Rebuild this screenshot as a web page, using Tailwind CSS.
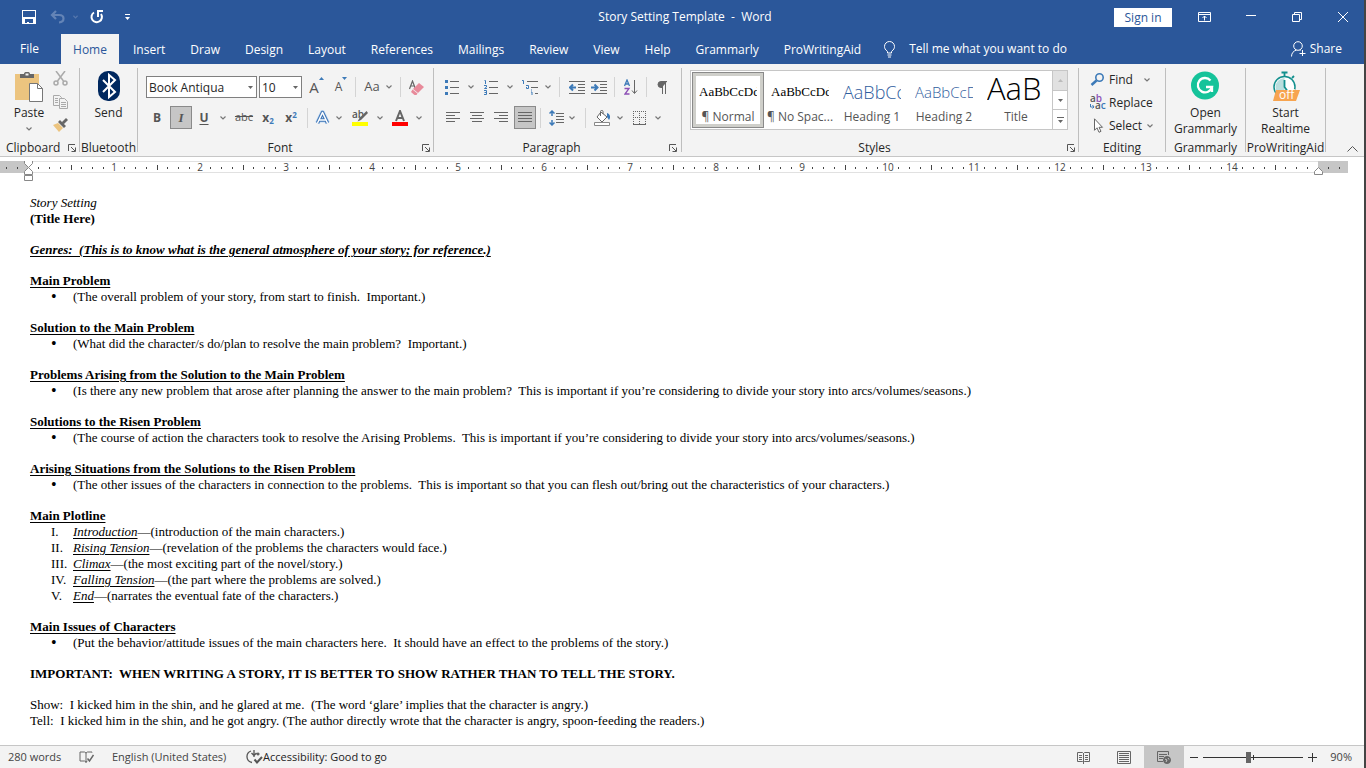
<!DOCTYPE html>
<html lang="en">
  <head>
    <meta charset="UTF-8" />
    <meta name="viewport" content="width=device-width, initial-scale=1.0" />
    <title>Story Setting Template - Word</title>
    <script src="https://cdn.jsdelivr.net/npm/@tailwindcss/browser@4"></script>
  </head>

  <body
    class="flex min-h-screen flex-col border-r-2 border-[#444] bg-white font-['Open_Sans','Noto_Sans',sans-serif] text-xs text-[#262626]"
  >
    <!-- shared icons -->
    <svg class="hidden">
      <symbol id="chev" viewBox="0 0 6 4">
        <path d="M.5.5 3 3 5.500.5" fill="none" stroke="#777" stroke-width="1.200" />
      </symbol>
      <symbol id="launch" viewBox="0 0 8 8">
        <path d="M.5 7V.5H7M3 3l4 4M7.500 3.500v4h-4" fill="none" stroke="#555" />
      </symbol>
    </svg>

    <header class="bg-[#2b579a] text-white">
      <div class="flex h-[34px] items-center">
        <div class="flex flex-1 items-center pl-[22px]">
          <button aria-label="Save">
            <svg width="14" height="14" viewBox="0 0 14 14">
              <path d="M0 0h14v14H0z" fill="#fff" />
              <path d="M1 1h12v6H1zM3 9h8v4H7v-1H5v1H3z" fill="#2b579a" />
            </svg>
          </button>
          <button class="ml-[14px] flex items-center gap-2" aria-label="Undo">
            <svg width="15" height="14" viewBox="0 0 15 14" fill="none" stroke="#6484b6" stroke-width="2.200">
              <path d="M6 1 2 5l4 4M2 5h7c6 0 6 7 0 7.500" />
            </svg>
            <svg width="5" height="4" viewBox="0 0 6 4">
              <path d="M.5.5 3 3 5.500.5" fill="none" stroke="#5577ad" stroke-width="1.500" />
            </svg>
          </button>
          <button class="ml-3" aria-label="Repeat">
            <svg width="14" height="14" viewBox="0 0 14 14" fill="none" stroke="#fff" stroke-width="2">
              <path d="M4 2.500A5.200 5.200 0 1 0 11 4" />
              <path d="M8 7V1H13" />
            </svg>
          </button>
          <button class="ml-5" aria-label="Customize Quick Access Toolbar">
            <svg width="7" height="7" viewBox="0 0 7 7" fill="#fff">
              <path d="M1 0h5v1H1zM1 3h5L3.500 6z" />
            </svg>
          </button>
        </div>
        <h1 class="whitespace-nowrap">Story Setting Template&nbsp; -&nbsp; Word</h1>
        <div class="flex flex-1 items-center justify-end pr-4">
          <button class="h-[19px] w-[58px] bg-white leading-[19px] text-[#2b579a]">Sign in</button>
          <button class="ml-[26px]" aria-label="Ribbon Display Options">
            <svg width="13" height="10" viewBox="0 0 13 10" fill="none" stroke="#fff">
              <path d="M.5.5h12v9H.5zM.5 2.500h12M6.500 8.500V4M4.500 6l2-2 2 2" />
            </svg>
          </button>
          <button class="ml-[35px]" aria-label="Minimize">
            <svg width="10" height="10" viewBox="0 0 10 10"><path d="M0 3.500h10" stroke="#fff" /></svg>
          </button>
          <button class="ml-9" aria-label="Restore">
            <svg width="10" height="10" viewBox="0 0 10 10" fill="none" stroke="#fff">
              <path d="M.5 2.500h7v7h-7zM2.500 2V.5h7v7H8" />
            </svg>
          </button>
          <button class="ml-9" aria-label="Close">
            <svg width="10" height="10" viewBox="0 0 10 10"><path d="m0 0 10 10M10 0 0 10" stroke="#fff" /></svg>
          </button>
        </div>
      </div>

      <nav class="flex h-[30px] items-stretch">
        <a href="#" class="flex w-[61px] items-center pl-5">File</a>
        <a href="#" class="flex w-[58px] items-center justify-center bg-[#f3f3f3] pt-0.5 text-[#2b579a]">Home</a>
        <div class="flex items-center gap-[25px] pt-0.5 pl-[14px]">
          <a href="#">Insert</a>
          <a href="#">Draw</a>
          <a href="#">Design</a>
          <a href="#">Layout</a>
          <a href="#">References</a>
          <a href="#">Mailings</a>
          <a href="#">Review</a>
          <a href="#">View</a>
          <a href="#">Help</a>
          <a href="#">Grammarly</a>
          <a href="#">ProWritingAid</a>
        </div>
        <button class="ml-[23px] flex items-center gap-[14px]">
          <svg width="11" height="17" viewBox="0 0 11 17" fill="none" stroke="#fff">
            <path d="M3.500 12V10.500C1 8.500.5 7 .5 5.500a5 5 0 0 1 10 0c0 1.500-.5 3-3 5V12zM3.500 14h4M4 16h3" />
          </svg>
          Tell me what you want to do
        </button>
        <button class="mr-[22px] ml-auto flex items-center gap-1">
          <svg width="15" height="16" viewBox="0 0 15 16" fill="none" stroke="#fff">
            <circle cx="7" cy="5" r="4.300" />
            <path d="M.5 15.500c0-3.500 2-5.500 5-6.500M8.500 9l1 .5M11.500 9v6M8.500 12.500h6" />
          </svg>
          Share
        </button>
      </nav>
    </header>

    <!-- ribbon -->
    <section class="flex h-[93px] border-b border-[#c6c6c6] bg-[#f3f3f3]">
      <div class="my-1 flex w-20 flex-col border-r border-[#bebebe]">
        <div class="flex flex-1 pl-[11px]">
          <button class="flex w-9 flex-col items-center">
            <svg class="mt-1" width="28" height="30" viewBox="0 0 28 30">
              <path d="M0 2h24v26H0z" fill="#ecc47f" />
              <path d="M5 6V2h4c0-3 6-3 6 0h4v4z" fill="#666" />
              <path d="M10.500 1.500h3v2h-3z" fill="#f3f3f3" />
              <path d="M14.500 11.500h8l5 5v13h-13z" fill="#fff" stroke="#777" />
              <path d="M22.500 11.500v5h5" fill="none" stroke="#777" />
            </svg>
            <span class="mt-[3px] leading-4">Paste</span>
            <svg class="mt-1.5" width="6" height="4"><use href="#chev" /></svg>
          </button>
          <div class="flex flex-col items-center gap-[9px] pt-[3px] pl-[5px]">
            <button aria-label="Cut">
              <svg width="15" height="15" viewBox="0 0 15 15" fill="none" stroke="#aaa" stroke-width="1.500">
                <path d="m3 0 7.500 10M12 0 4.500 10" />
                <circle cx="3" cy="12" r="2" /><circle cx="12" cy="12" r="2" />
              </svg>
            </button>
            <button aria-label="Copy">
              <svg width="15" height="14" viewBox="0 0 15 14" fill="#f3f3f3" stroke="#aaa">
                <path d="M.5.5h6l2 2v8h-8z" /><path d="M6.500 3.500h5l3 3v7h-8zM2 3.500h3M2 5.500h3M2 7.500h3M8 7.500h5M8 9.500h5M8 11.500h5" />
              </svg>
            </button>
            <button aria-label="Format Painter">
              <svg width="16" height="14" viewBox="0 0 16 14">
                <path d="m1 7 5-2 5 5-4 4z" fill="#ecc47f" />
                <path d="m6 4 2-2 6 6-2 2zM10 4l4-4 2 2-4 4z" fill="#666" />
              </svg>
            </button>
          </div>
        </div>
        <div class="flex h-2 items-center justify-between pr-[3px] pl-1.5">
          Clipboard
          <button aria-label="Clipboard options"><svg width="8" height="8"><use href="#launch" /></svg></button>
        </div>
      </div>

      <div class="my-1 flex w-[58px] flex-col items-center border-r border-[#bebebe]">
        <button class="flex flex-1 flex-col items-center">
          <svg class="mt-[3px]" width="22" height="30" viewBox="0 0 22 30">
            <rect width="22" height="30" rx="10" fill="#00285f" />
            <path d="m5 9 12 12-6 5V4l6 5L5 21" fill="none" stroke="#fff" stroke-width="2" />
          </svg>
          <span class="mt-1 leading-4">Send</span>
        </button>
        <div class="flex h-2 items-center">Bluetooth</div>
      </div>

      <div class="my-1 flex w-[296px] flex-col border-r border-[#bebebe]">
        <div class="flex flex-1 flex-col gap-2 pt-2">
          <div class="flex h-[22px] items-center pl-2">
            <div class="relative h-full w-[111px]">
              <input class="h-full w-full border border-[#7f7f7f] bg-white pl-0.5" value="Book Antiqua" aria-label="Font" />
              <svg class="absolute top-[10px] right-1" width="5" height="3"><path d="M0 0h5L2.500 3z" fill="#666" /></svg>
            </div>
            <div class="relative ml-0.5 h-full w-[43px]">
              <input class="h-full w-full border border-[#7f7f7f] bg-white pl-0.5" value="10" aria-label="Font size" />
              <svg class="absolute top-[10px] right-1" width="5" height="3"><path d="M0 0h5L2.500 3z" fill="#666" /></svg>
            </div>
            <button class="ml-0.5 flex w-[25px] justify-center" aria-label="Grow font">
              <span class="text-[15px] leading-5 text-[#555]">A</span>
              <svg width="5" height="3"><path d="M0 3h5L2.500 0z" fill="#3d7ab8" /></svg>
            </button>
            <button class="flex w-6 justify-center" aria-label="Shrink font">
              <span class="text-xs leading-5 text-[#555]">A</span>
              <svg width="5" height="3"><path d="M0 0h5L2.500 3z" fill="#3d7ab8" /></svg>
            </button>
            <i class="mx-0.5 h-5 w-px bg-[#d4d4d4]"></i>
            <button class="flex w-10 items-center justify-center gap-1.5 text-[13px] text-[#555]">
              Aa <svg width="6" height="4"><use href="#chev" /></svg>
            </button>
            <i class="mx-0.5 h-5 w-px bg-[#d4d4d4]"></i>
            <button class="ml-1.5" aria-label="Clear formatting">
              <svg width="15" height="15" viewBox="0 0 15 15">
                <path d="m.5 9 3-8 3 8M1.500 6h4" fill="none" stroke="#666" stroke-width="1.200" />
                <path d="m10 3 5 4-6 6-5-4z" fill="#e88a9a" />
                <path d="m3.500 9.500 5 4-1 1.500h-2L2 12z" fill="#e88a9a" />
              </svg>
            </button>
          </div>
          <div class="flex h-[23px] items-center pl-1.5 text-[#555]">
            <button class="w-[26px] font-bold">B</button>
            <button class="h-full w-[22px] border border-[#8a8a8a] bg-[#c6c6c6] font-['Liberation_Serif',serif] text-[13px] font-bold italic">I</button>
            <button class="w-6 font-bold underline underline-offset-2">U</button>
            <button class="flex w-[14px] justify-center" aria-label="Underline style"><svg width="6" height="4"><use href="#chev" /></svg></button>
            <button class="w-7 text-[11px] line-through">abc</button>
            <button class="w-5 font-bold">x<sub class="text-[8px] text-[#3d7ab8]">2</sub></button>
            <button class="w-[26px] font-bold">x<sup class="text-[8px] text-[#3d7ab8]">2</sup></button>
            <i class="mx-[3px] h-5 w-px bg-[#d4d4d4]"></i>
            <button class="flex w-[22px] justify-center" aria-label="Text effects">
              <svg width="15" height="16" viewBox="0 0 15 16" stroke-linejoin="round" fill="none">
                <path d="M2.500 13 7.500 2.500l5 10.500M4.500 10h6" stroke="#c3daf2" stroke-width="5" />
                <path d="M2.500 13 7.500 2.500l5 10.500M4.500 10h6" stroke="#3d74b5" stroke-width="3.500" />
                <path d="M2.500 13 7.500 2.500l5 10.500M4.500 10h6" stroke="#fff" stroke-width="1.500" />
              </svg>
            </button>
            <button class="flex w-3 justify-center" aria-label="Text effects menu"><svg width="6" height="4"><use href="#chev" /></svg></button>
            <button class="flex w-[30px] justify-center" aria-label="Highlight color">
              <svg width="16" height="16" viewBox="0 0 16 16">
                <text x="0" y="8" font-size="10" font-weight="600" fill="#555">ab</text>
                <path d="m14.500 1-7 7-2 3.500 3.500-1.500 7-7z" fill="#666" />
                <path d="M0 12h16v4H0z" fill="#ff0" />
              </svg>
            </button>
            <button class="flex w-2.5 justify-center" aria-label="Highlight menu"><svg width="6" height="4"><use href="#chev" /></svg></button>
            <button class="flex w-[30px] justify-center" aria-label="Font color">
              <svg width="16" height="16" viewBox="0 0 16 16">
                <path d="m4 11 4-10 4 10M5.500 8h5" fill="none" stroke="#666" stroke-width="2" />
                <path d="M0 12h16v4H0z" fill="#f00" />
              </svg>
            </button>
            <button class="flex w-2 justify-center" aria-label="Font color menu"><svg width="6" height="4"><use href="#chev" /></svg></button>
          </div>
        </div>
        <div class="flex h-2 items-center pr-[3px]">
          <span class="flex-1 text-center">Font</span>
          <button aria-label="Font options"><svg width="8" height="8"><use href="#launch" /></svg></button>
        </div>
      </div>

      <div class="my-1 flex w-[248px] flex-col border-r border-[#bebebe]">
        <div class="flex flex-1 flex-col gap-2 pt-2">
          <div class="flex h-[22px] items-center pl-[7px]">
            <button class="flex w-[22px] justify-center" aria-label="Bullets">
              <svg width="14" height="16" viewBox="0 0 14 16">
                <path d="M0 1h3v3H0zM0 7h3v3H0zM0 13h3v3H0z" fill="#3d7ab8" />
                <path d="M5 2.500h9M5 8.500h9M5 14.500h9" stroke="#666" />
              </svg>
            </button>
            <button class="flex w-4 justify-center" aria-label="Bullets menu"><svg width="6" height="4"><use href="#chev" /></svg></button>
            <button class="flex w-6 justify-center" aria-label="Numbering">
              <svg width="14" height="16" viewBox="0 0 14 16">
                <path d="M.5 1.500h1V5M0 6.500h2.500v1.500L.5 9.500H3M0 11.500h2.500v4H0M.5 13.500h2" fill="none" stroke="#3d7ab8" />
                <path d="M5 2.500h9M5 8.500h9M5 14.500h9" stroke="#666" />
              </svg>
            </button>
            <button class="flex w-[14px] justify-center" aria-label="Numbering menu"><svg width="6" height="4"><use href="#chev" /></svg></button>
            <button class="flex w-[26px] justify-center" aria-label="Multilevel list">
              <svg width="16" height="16" viewBox="0 0 16 16">
                <path d="M0 1.500h1.500V5M4 6.500h2.500V9.500H4.500V8M9.500 10.500v1M9 13h1v3" fill="none" stroke="#3d7ab8" />
                <path d="M5 2.500h11M9 8.500h7M13 14.500h3" stroke="#666" />
              </svg>
            </button>
            <button class="flex w-2.5 justify-center" aria-label="Multilevel menu"><svg width="6" height="4"><use href="#chev" /></svg></button>
            <i class="mx-1.5 h-5 w-px bg-[#d4d4d4]"></i>
            <button class="flex w-[22px] justify-center" aria-label="Decrease indent">
              <svg width="16" height="13" viewBox="0 0 16 13">
                <path d="M0 .5h16M9 3.500h7M9 6.500h7M9 9.500h7M0 12.500h16" stroke="#666" />
                <path d="M7 6.500H1M4 3.500l-3 3 3 3" fill="none" stroke="#3d7ab8" stroke-width="2" />
              </svg>
            </button>
            <button class="flex w-[22px] justify-center" aria-label="Increase indent">
              <svg width="16" height="13" viewBox="0 0 16 13">
                <path d="M0 .5h16M9 3.500h7M9 6.500h7M9 9.500h7M0 12.500h16" stroke="#666" />
                <path d="M0 6.500h6M3.500 3.500l3 3-3 3" fill="none" stroke="#3d7ab8" stroke-width="2" />
              </svg>
            </button>
            <i class="mx-1 h-5 w-px bg-[#d4d4d4]"></i>
            <button class="flex w-6 justify-center" aria-label="Sort">
              <svg width="14" height="16" viewBox="0 0 14 16" fill="none">
                <path d="M.5 7 3 1l2.500 6M1.500 5h3" stroke="#3d7ab8" stroke-width="1.300" />
                <path d="M.5 9.500h4.500L1 15h4.500" stroke="#8c4fb5" stroke-width="1.300" />
                <path d="M10.500 1v13M8 11.500l2.500 3 2.500-3" stroke="#666" />
              </svg>
            </button>
            <i class="mx-[3px] h-5 w-px bg-[#d4d4d4]"></i>
            <button class="flex w-6 justify-center" aria-label="Show paragraph marks">
              <svg width="10" height="13" viewBox="0 0 10 13">
                <path d="M10 .5H4a3 3 0 0 0 0 6h1" fill="#666" stroke="#666" /><path d="M5.500 0v13M8.500 0v13" stroke="#666" />
              </svg>
            </button>
          </div>
          <div class="flex h-[23px] items-center pl-[7px]">
            <button class="flex w-6 justify-center" aria-label="Align left">
              <svg width="14" height="11" viewBox="0 0 14 11"><path d="M0 .5h14M0 3.500h9M0 6.500h14M0 9.500h9" stroke="#666" /></svg>
            </button>
            <button class="flex w-6 justify-center" aria-label="Center">
              <svg width="14" height="11" viewBox="0 0 14 11"><path d="M0 .5h14M2 3.500h10M0 6.500h14M2 9.500h10" stroke="#666" /></svg>
            </button>
            <button class="flex w-6 justify-center" aria-label="Align right">
              <svg width="14" height="11" viewBox="0 0 14 11"><path d="M0 .5h14M5 3.500h9M0 6.500h14M5 9.500h9" stroke="#666" /></svg>
            </button>
            <button class="ml-px flex h-full w-[22px] items-center justify-center border border-[#8a8a8a] bg-[#c6c6c6]" aria-label="Justify">
              <svg width="14" height="11" viewBox="0 0 14 11"><path d="M0 .5h14M0 3.500h14M0 6.500h14M0 9.500h14" stroke="#666" /></svg>
            </button>
            <i class="mx-1 h-5 w-px bg-[#d4d4d4]"></i>
            <button class="flex w-[22px] justify-center" aria-label="Line spacing">
              <svg width="15" height="16" viewBox="0 0 15 16" fill="none">
                <path d="M3 1v5M3 10v5M.5 3.500 3 1l2.500 2.500M.5 12.500 3 15l2.500-2.500" stroke="#3d7ab8" stroke-width="1.500" />
                <path d="M7 3.500h8M7 6.500h8M7 9.500h8M7 12.500h8" stroke="#666" />
              </svg>
            </button>
            <button class="flex w-2.5 justify-center" aria-label="Line spacing menu"><svg width="6" height="4"><use href="#chev" /></svg></button>
            <i class="mx-2 h-5 w-px bg-[#d4d4d4]"></i>
            <button aria-label="Shading">
              <svg width="16" height="16" viewBox="0 0 16 16">
                <path d="M13 3c3 1 4 4 2 7l-2-3z" fill="#3d7ab8" />
                <path d="m7 2 6 5-5 5-5-5zM6.500 6V1.500C6.500 0 9 0 9 1.500V4" fill="#fff" stroke="#666" />
                <path d="M.5 12.500h15v3H.5z" fill="#fff" stroke="#888" />
              </svg>
            </button>
            <button class="flex w-5 justify-center" aria-label="Shading menu"><svg width="6" height="4"><use href="#chev" /></svg></button>
            <button class="flex w-[18px] justify-center" aria-label="Borders">
              <svg width="13" height="14" viewBox="0 0 13 14" fill="none" stroke="#666">
                <path d="M0 .5h13M0 6.500h13M.5 0v13M6.500 0v13M12.500 0v13" stroke-dasharray="1 1" />
                <path d="M0 13.500h13" />
              </svg>
            </button>
            <button class="flex w-5 justify-center" aria-label="Borders menu"><svg width="6" height="4"><use href="#chev" /></svg></button>
          </div>
        </div>
        <div class="flex h-2 items-center pr-1">
          <span class="flex-1 text-center">Paragraph</span>
          <button aria-label="Paragraph options"><svg width="8" height="8"><use href="#launch" /></svg></button>
        </div>
      </div>

      <div class="my-1 flex w-[397px] flex-col border-r border-[#bebebe]">
        <div class="flex-1 pt-0.5 pl-2">
          <div class="flex h-[60px] w-[378px] border border-[#c6c6c6] bg-white text-[#555]">
            <div class="flex flex-1 items-center pl-px">
              <button class="flex h-14 w-[72px] flex-col items-center border border-[#8a8a8a] p-px ring-3 ring-[#cfcfca] ring-inset">
                <span class="h-[35px] w-[58px] overflow-hidden text-left font-['Liberation_Serif',serif] text-[13px] leading-9 text-black">AaBbCcDd</span>
                <span class="leading-4">¶ Normal</span>
              </button>
              <button class="flex h-14 w-[72px] flex-col items-center pt-0.5">
                <span class="h-[35px] w-[58px] overflow-hidden text-left font-['Liberation_Serif',serif] text-[13px] leading-9 text-black">AaBbCcDd</span>
                <span class="leading-4 whitespace-nowrap">¶ No Spac...</span>
              </button>
              <button class="flex h-14 w-[72px] flex-col items-center pt-0.5">
                <span class="h-[35px] w-[58px] overflow-hidden text-left text-lg leading-9 font-light text-[#2f5d9e]">AaBbCc</span>
                <span class="leading-4">Heading 1</span>
              </button>
              <button class="flex h-14 w-[72px] flex-col items-center pt-0.5">
                <span class="h-[35px] w-[58px] overflow-hidden text-left text-[15px] leading-9 font-light text-[#2f5d9e]">AaBbCcDd</span>
                <span class="leading-4">Heading 2</span>
              </button>
              <button class="flex h-14 w-[72px] flex-col items-center pt-0.5">
                <span class="h-[35px] w-[58px] overflow-hidden text-left text-[31px] leading-7 font-light text-black">AaB</span>
                <span class="leading-4">Title</span>
              </button>
            </div>
            <div class="flex w-[15px] flex-col border-l border-[#c6c6c6]">
              <button class="flex flex-1 items-center justify-center bg-[#e1e1e1]" aria-label="Previous styles">
                <svg width="5" height="3"><path d="M0 3h5L2.500 0z" fill="#bbb" /></svg>
              </button>
              <button class="flex flex-1 items-center justify-center border-y border-[#c6c6c6]" aria-label="Next styles">
                <svg width="5" height="3"><path d="M0 0h5L2.500 3z" fill="#666" /></svg>
              </button>
              <button class="flex flex-1 items-center justify-center" aria-label="More styles">
                <svg width="7" height="6"><path d="M0 0h7v1H0zM1 3h5L3.500 6z" fill="#666" /></svg>
              </button>
            </div>
          </div>
        </div>
        <div class="flex h-2 items-center pr-[3px]">
          <span class="flex-1 text-center">Styles</span>
          <button aria-label="Styles options"><svg width="8" height="8"><use href="#launch" /></svg></button>
        </div>
      </div>

      <div class="my-1 flex w-[87px] flex-col border-r border-[#bebebe]">
        <div class="flex flex-1 flex-col pl-[11px]">
          <button class="flex h-[23px] items-center">
            <svg width="19" height="13" viewBox="0 0 19 13" fill="none" stroke="#3d7ab8">
              <circle cx="9.500" cy="4.500" r="3.700" stroke-width="1.600" /><path d="m6.500 7.500-5 4.500" stroke-width="2.500" />
            </svg>
            Find
            <svg class="ml-[11px]" width="6" height="4"><use href="#chev" /></svg>
          </button>
          <button class="flex h-[23px] items-center">
            <svg width="19" height="17" viewBox="0 0 19 17" font-size="10" font-weight="600">
              <text x="0" y="8" fill="#555">a<tspan fill="#8c4fb5">b</tspan></text>
              <text x="5" y="15" fill="#555">a<tspan fill="#3d7ab8">c</tspan></text>
              <path d="M.5 10v3H4M2.500 11 4 13l-1.500 1.500" fill="none" stroke="#3d7ab8" />
            </svg>
            Replace
          </button>
          <button class="flex h-[23px] items-center">
            <svg width="19" height="15" viewBox="0 0 19 15">
              <path d="M4.500.8v11.500l2.500-2.500 2 4.500 2-1-2-4h3.500z" fill="#fff" stroke="#666" />
            </svg>
            Select
            <svg class="ml-[5px]" width="6" height="4"><use href="#chev" /></svg>
          </button>
        </div>
        <div class="flex h-2 items-center justify-center">Editing</div>
      </div>

      <div class="my-1 flex w-20 flex-col items-center border-r border-[#bebebe]">
        <button class="flex flex-1 flex-col items-center">
          <svg class="mt-[3px]" width="28" height="29" viewBox="0 0 28 29">
            <circle cx="14" cy="14.500" r="14" fill="#15c39a" />
            <path d="M19.500 9.500A7.200 7.200 0 1 0 21 16h-6M21 15v6" fill="none" stroke="#fff" stroke-width="2.300" />
          </svg>
          <span class="mt-[5px] leading-4">Open<br />Grammarly</span>
        </button>
        <div class="flex h-2 items-center">Grammarly</div>
      </div>

      <div class="my-1 flex w-20 flex-col items-center border-r border-[#bebebe]">
        <button class="flex flex-1 flex-col items-center">
          <svg class="mt-[3px]" width="28" height="31" viewBox="0 0 28 31">
            <circle cx="12.500" cy="16" r="10.500" fill="#fff" stroke="#12908e" stroke-width="1.500" />
            <path d="M12.500 7a9 9 0 0 0 0 18z" fill="#b9dede" />
            <path d="M12.500 9v7l3 4M12.500 5V1M9.500 1.500h6M20 7l2-2" fill="none" stroke="#12908e" stroke-width="1.800" />
            <path d="M4 19h24l-4 11H1z" fill="#f7a450" />
            <text x="7" y="28" font-size="12" fill="#fff">off</text>
          </svg>
          <span class="mt-[3px] leading-4">Start<br />Realtime</span>
        </button>
        <div class="flex h-2 items-center">ProWritingAid</div>
      </div>

      <button class="mr-1.5 mb-1 ml-auto self-end" aria-label="Collapse the ribbon">
        <svg width="11" height="6" viewBox="0 0 11 6"><path d="m.5 5.500 5-5 5 5" fill="none" stroke="#555" /></svg>
      </button>
    </section>

    <svg id="ruler" class="mt-1 h-5 w-full shrink-0" font-size="10" fill="#444" text-anchor="middle">
      <rect y="0" width="1348" height="12" fill="#e1e1e1" />
      <rect y="1" width="1348" height="10" fill="#fff" />
      <rect y="0" width="28" height="12" fill="#c6c6c6" />
      <rect x="1318" y="0" width="30" height="12" fill="#c6c6c6" />
    </svg>

    <main class="flex-1 px-[30px] pt-3.5 font-['Liberation_Serif',serif] text-[13px] leading-4 text-black">
      <p class="italic">Story Setting</p>
      <p class="font-bold">(Title Here)</p>
      <p class="mt-[15px] font-bold italic underline underline-offset-2">Genres:&nbsp; (This is to know what is the general atmosphere of your story; for reference.)</p>
      <h2 class="mt-[15px] font-bold underline underline-offset-2">Main Problem</h2>
      <ul class="pl-[21px]">
        <li class="flex before:w-[22px] before:shrink-0 before:text-base before:leading-4 before:content-['•']">(The overall problem of your story, from start to finish.&nbsp; Important.)</li>
      </ul>
      <h2 class="mt-[15px] font-bold underline underline-offset-2">Solution to the Main Problem</h2>
      <ul class="pl-[21px]">
        <li class="flex before:w-[22px] before:shrink-0 before:text-base before:leading-4 before:content-['•']">(What did the character/s do/plan to resolve the main problem?&nbsp; Important.)</li>
      </ul>
      <h2 class="mt-[15px] font-bold underline underline-offset-2">Problems Arising from the Solution to the Main Problem</h2>
      <ul class="pl-[21px]">
        <li class="flex before:w-[22px] before:shrink-0 before:text-base before:leading-4 before:content-['•']">(Is there any new problem that arose after planning the answer to the main problem?&nbsp; This is important if you’re considering to divide your story into arcs/volumes/seasons.)</li>
      </ul>
      <h2 class="mt-[15px] font-bold underline underline-offset-2">Solutions to the Risen Problem</h2>
      <ul class="pl-[21px]">
        <li class="flex before:w-[22px] before:shrink-0 before:text-base before:leading-4 before:content-['•']">(The course of action the characters took to resolve the Arising Problems.&nbsp; This is important if you’re considering to divide your story into arcs/volumes/seasons.)</li>
      </ul>
      <h2 class="mt-[15px] font-bold underline underline-offset-2">Arising Situations from the Solutions to the Risen Problem</h2>
      <ul class="pl-[21px]">
        <li class="flex before:w-[22px] before:shrink-0 before:text-base before:leading-4 before:content-['•']">(The other issues of the characters in connection to the problems.&nbsp; This is important so that you can flesh out/bring out the characteristics of your characters.)</li>
      </ul>
      <h2 class="mt-[15px] font-bold underline underline-offset-2">Main Plotline</h2>
      <div class="grid grid-cols-[22px_1fr] pl-[21px]">
        <span>I.</span><span><i class="underline underline-offset-2">Introduction</i>—(introduction of the main characters.)</span>
        <span>II.</span><span><i class="underline underline-offset-2">Rising Tension</i>—(revelation of the problems the characters would face.)</span>
        <span>III.</span><span><i class="underline underline-offset-2">Climax</i>—(the most exciting part of the novel/story.)</span>
        <span>IV.</span><span><i class="underline underline-offset-2">Falling Tension</i>—(the part where the problems are solved.)</span>
        <span>V.</span><span><i class="underline underline-offset-2">End</i>—(narrates the eventual fate of the characters.)</span>
      </div>
      <h2 class="mt-[15px] font-bold underline underline-offset-2">Main Issues of Characters</h2>
      <ul class="pl-[21px]">
        <li class="flex before:w-[22px] before:shrink-0 before:text-base before:leading-4 before:content-['•']">(Put the behavior/attitude issues of the main characters here.&nbsp; It should have an effect to the problems of the story.)</li>
      </ul>
      <p class="mt-[15px] font-bold">IMPORTANT:&nbsp; WHEN WRITING A STORY, IT IS BETTER TO SHOW RATHER THAN TO TELL THE STORY.</p>
      <p class="mt-[15px]">Show:&nbsp; I kicked him in the shin, and he glared at me.&nbsp; (The word ‘glare’ implies that the character is angry.)</p>
      <p>Tell:&nbsp; I kicked him in the shin, and he got angry. (The author directly wrote that the character is angry, spoon-feeding the readers.)</p>
    </main>

    <footer class="flex h-[23px] shrink-0 items-center border-t border-[#c6c6c6] bg-[#f3f3f3] pl-2 text-[11px] text-[#444]">
      <span class="w-[71px]">280 words</span>
      <button aria-label="Proofing">
        <svg width="15" height="13" viewBox="0 0 15 13" fill="none" stroke="#666">
          <path d="M13 1.500V1H8.500l-1.500 1L5.500 1H1v9h4.500L7 11l1.500-1M7 2v10" /><path d="m8.500 7.500 2 2.500 4-6" stroke-width="1.500" />
        </svg>
      </button>
      <span class="ml-[18px] w-[134px]">English (United States)</span>
      <button class="flex items-center">
        <svg width="17" height="14" viewBox="0 0 17 14" fill="none" stroke="#555" stroke-width="1.300">
          <path d="M5 1C-.5 3-.5 11 6 12.500M8 0v7M5.500 3 8 5.500 10.500 3M12 2.500v3M10.500 4h3" /><path d="m8.500 9.500 2.500 3L16 7" stroke-width="2" />
        </svg>
        <span class="text-[#222]">Accessibility: Good to go</span>
      </button>
      <div class="ml-auto flex h-full items-center">
        <button class="mr-[27px]" aria-label="Read mode">
          <svg width="13" height="13" viewBox="0 0 13 13" fill="none" stroke="#666">
            <path d="M.5 1.500h5l1 1 1-1h5v9h-5l-1 1-1-1h-5zM6.500 2v11M2 4.500h3M2 6.500h3M2 8.500h3M8 4.500h3M8 6.500h3M8 8.500h3" />
          </svg>
        </button>
        <button class="mr-[13px]" aria-label="Print layout">
          <svg width="14" height="13" viewBox="0 0 14 13" fill="none" stroke="#666">
            <path d="M.5.5h13v12H.5zM2 2.500h10M2 4.500h10M2 6.500h10M2 8.500h10M2 10.500h10" />
          </svg>
        </button>
        <button class="flex h-full w-10 items-center justify-center bg-[#c6c6c6]" aria-label="Web layout">
          <svg width="14" height="13" viewBox="0 0 14 13" fill="none" stroke="#666">
            <path d="M6 10.500H.5V.5h11V4M2 3.500h8M2 5.500h5M2 7.500h4" /><circle cx="10" cy="9" r="3.500" fill="#666" />
            <path d="m8 8 2 1-1 2M11 7l1 1.500" stroke="#c6c6c6" />
          </svg>
        </button>
        <button class="ml-1.5" aria-label="Zoom out"><svg width="8" height="9"><path d="M0 4.500h8" stroke="#333" /></svg></button>
        <div class="relative mx-[5px] flex h-3 w-[100px] items-center">
          <input type="range" min="10" max="190" value="90" aria-label="Zoom" class="absolute inset-0 w-full opacity-0" />
          <svg width="100" height="12"><path d="M0 6.500h100M50.500 4v5" stroke="#333" /><path d="M43 1h5v11h-5z" fill="#666" /></svg>
        </div>
        <button aria-label="Zoom in"><svg width="9" height="9"><path d="M0 4.500h9M4.500 0v9" stroke="#333" /></svg></button>
        <span class="mr-3 ml-[13px]">90%</span>
      </div>
    </footer>

    <script>
      const ruler = document.getElementById('ruler')
      let marks = ''

      // eight steps to the inch, 86px per inch
      for (let i = -2; i <= 122; i++) {
        const x = Math.round(28.5 + (i * 86) / 8)
        if (i === 0 || i === 120) continue
        if (i > 0 && i % 8 === 0) {
          marks += `<text x="${x - 1}" y="10">${i / 8}</text>`
        } else if (i > 0 && i % 4 === 0) {
          marks += `<rect x="${x - 1}" y="4" width="1" height="5" />`
        } else {
          marks += `<rect x="${x - 1}" y="6" width="1" height="2" />`
        }
      }

      // indent markers
      marks += `<g fill="#fff" stroke="#888">
        <path d="M24.500-1.500h8v4l-4 4-4-4zM24.500 13.500v-3l4-4 4 4v3zM24.500 14.500h8v5h-8z" />
        <path d="M1314.500 13.500v-3l4-4 4 4v3z" />
      </g>`
      ruler.innerHTML += marks
    </script>
  </body>
</html>
